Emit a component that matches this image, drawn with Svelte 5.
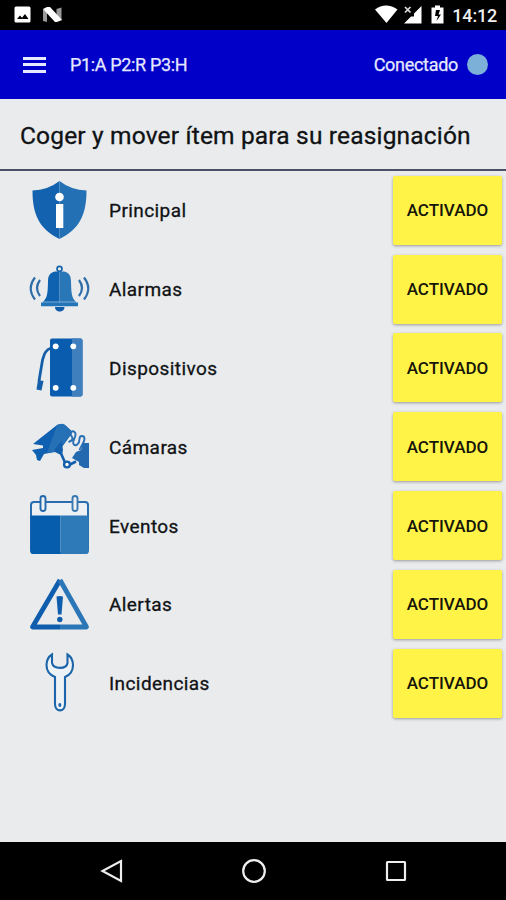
<script lang="ts">
    const items = [
        { id: 'shield', name: 'Principal' },
        { id: 'bell', name: 'Alarmas' },
        { id: 'device', name: 'Dispositivos' },
        { id: 'camera', name: 'Cámaras' },
        { id: 'calendar', name: 'Eventos' },
        { id: 'alert', name: 'Alertas' },
        { id: 'wrench', name: 'Incidencias' }
    ];
</script>

<div class="screen">
    <div class="status">
        <svg class="notifications" viewBox="0 0 50 18">
            <rect x="0.5" y="0.5" width="16" height="16" rx="1.5" fill="#fff" />
            <path d="M3 13 6 9.5l2 2.3L11 8l3.5 5z" fill="#000" />
            <path d="M29 3v12l4 1V6z" fill="#999" />
            <path d="M47.500 1.500v13l-5-3V3z" fill="#999" />
            <path d="M29 3 33 1h3l12 13-5 2h-2z" fill="#fff" />
        </svg>
        <div class="right">
            <svg class="indicators" viewBox="0 0 70 20">
                <path d="M0 4.500C7-.8 15-.8 22.500 4.500L11.500 18z" fill="#fff" />
                <path d="M46.500 1v17.500H29L36 11.500h3V8.500z" fill="#fff" />
                <path d="m30 2 5.500 5.500m0-5.500L30 7.500" stroke="#ddd" stroke-width="1.700" />
                <path d="M56.500 2.500H60V.5h5v2h3.500v16h-12z" fill="#fff" />
                <path d="M65 5h-4l-1 6h3l-1.500 5L66 9.500h-2.500z" fill="#000" />
            </svg>
            <span class="clock">14:12</span>
        </div>
    </div>

    <header>
        <div class="menu"><i></i><i></i><i></i></div>
        <span class="profile">P1:A P2:R P3:H</span>
        <span class="state">Conectado</span>
        <div class="dot"></div>
    </header>

    <h1>Coger y mover ítem para su reasignación</h1>

    <main>
        {#each items as item}
            <div class="row">
                <svg class="icon" viewBox="0 0 80 78.800">
                    {#if item.id === 'shield'}
                        <path d="M39.500 10Q28 19 12.500 19.500C12.500 43 19 58 39.500 68z" fill="#1262b0" />
                        <path d="M39.500 10Q51 19 66.500 19.500C66.500 43 60 58 39.500 68z" fill="#2470b4" />
                        <circle cx="39.500" cy="26" r="4.300" fill="#fff" />
                        <rect x="36" y="33" width="7.300" height="24" fill="#fff" />
                    {:else if item.id === 'bell'}
                        <circle cx="39.500" cy="18.800" r="2.500" fill="none" stroke="#1764ad" stroke-width="1.700" />
                        <path d="M35 57h9.500c0 6-9.500 6-9.500 0z" fill="#0f5cab" />
                        <path d="M39.500 21.500H35c-5 1-7 4-7 10-.3 12-.5 16-5 20.500v1h16.500z" fill="#0f62b0" />
                        <path d="M39.500 21.500H44c5 1 7 4 7 10 .3 12 .5 16 5 20.500v1H39.500z" fill="#2a77b8" />
                        <path d="M21 52.500h37v3.800H21z" fill="#2474b8" />
                        <path d="M22.500 52h34" stroke="#8bb6da" stroke-width="0.900" />
                        <path d="M20 30q-6 8 0 16M15 27.500q-8.500 11 0 22M59 30q6 8 0 16M64 27.500q8.500 11 0 22" fill="none" stroke="#2f6da9" stroke-width="2.200" />
                    {:else if item.id === 'device'}
                        <path d="M31 19c-6 2-7 7-8.500 12l-3.500 21" fill="none" stroke="#155ea9" stroke-width="2.800" />
                        <path d="m18 51 5.500 1-2 9.500-5-1z" fill="#155ea9" />
                        <rect x="30" y="9.500" width="32.500" height="58" rx="2" fill="#0a5cae" />
                        <path d="M52 9.500h8.500q2 0 2 2v54q0 2-2 2H52z" fill="#407fbd" />
                        <g fill="#fff">
                            <circle cx="35.700" cy="17.300" r="2.900" />
                            <circle cx="53.300" cy="17.300" r="2.900" />
                            <circle cx="35.700" cy="58.800" r="2.900" />
                            <circle cx="53.300" cy="58.800" r="2.900" />
                        </g>
                    {:else if item.id === 'camera'}
                        <path d="M13 37 37 18q4-2 8 0l6 5.500q2 2 0 4L39 44l-4 1-11 2-4 7-3-1-1-5-4-5 11-2v-2.500z" fill="#0f60b0" />
                        <path d="m37 18 4-1q2-.5 4 1l6 5.500q2 2 0 4L39 44l-12 2z" fill="#2671b5" />
                        <path d="M34 43 41.500 34l1.500 9-1 5z" fill="#145fab" />
                        <path d="m35 43.500 6 3 4 9M50 57.500l6-3" fill="none" stroke="#145fab" stroke-width="2.600" />
                        <circle cx="47" cy="57.500" r="2.900" fill="#fff" stroke="#145fab" stroke-width="2.400" />
                        <path d="M48.500 35q6-2 3-6c-3-3 1-6 3-4 4 3-3 8-1 12 2 3 6 0 6-5 0-4 5-4 5 0 0 3-3 6-5 11" fill="none" stroke="#286fb4" stroke-width="1.900" />
                        <path d="m52 51 4-6 5-2 2-7h6v25h-5l-5-3v-3z" fill="#2369b0" />
                    {:else if item.id === 'calendar'}
                        <rect x="11" y="16" width="57" height="51" rx="3" fill="#edf1f4" stroke="#2b6eb0" stroke-width="2" />
                        <path d="M10.500 29.500h30V68H13q-2.500 0-2.500-2.500z" fill="#075dad" />
                        <path d="M40.500 29.500H68.500V65.500Q68.500 68 66 68H40.500z" fill="#2e79b7" />
                        <rect x="20.500" y="10" width="5" height="15" rx="2.500" fill="#eef1f4" stroke="#2368ab" stroke-width="1.900" />
                        <rect x="52.500" y="10" width="5" height="15" rx="2.500" fill="#eef1f4" stroke="#3979b1" stroke-width="1.900" />
                    {:else if item.id === 'alert'}
                        <path d="M40 15 12.500 62h27.500" fill="none" stroke="#0f5eae" stroke-width="4.800" stroke-linejoin="round" />
                        <path d="m40 15 26.500 47H40" fill="none" stroke="#2b76b6" stroke-width="4.800" stroke-linejoin="round" />
                        <path d="M36.500 31.500q3-1 6.500 0l-1.500 18h-3.500z" fill="#0e5ead" />
                        <circle cx="39.800" cy="54.500" r="2.700" fill="#0e5ead" />
                    {:else}
                        <path d="M32 10.500q-5.500 3.500-5.500 10.500c0 6 3.500 10 8.500 12v27c0 8.500 10 8.500 10 0V33c5-2 8-6 8-12q0-7-5.500-10.500v8.500c-1 6.500-14 6.500-15.500 0z" fill="#edf2f5" stroke="#1c65ab" stroke-width="2.100" />
                        <ellipse cx="39.800" cy="61" rx="1.500" ry="2" fill="#1c65ab" />
                    {/if}
                </svg>
                <span class="name">{item.name}</span>
                <button>ACTIVADO</button>
            </div>
        {/each}
    </main>

    <nav>
        <svg viewBox="0 0 26 26"><path d="M22 3v20L3.500 13z" /></svg>
        <svg viewBox="0 0 26 26"><circle cx="13" cy="13" r="10.800" /></svg>
        <svg viewBox="0 0 26 26"><rect x="4" y="4" width="18" height="18" rx="0.500" /></svg>
    </nav>
</div>

<style>
    :global(body) {
        background: #e9ebed;
    }

    .screen {
        display: flex;
        flex-direction: column;
        height: 900px;
        font-family: Roboto, sans-serif;
        color: #101214;
        background: #e9ebed;
    }

    .status {
        display: flex;
        justify-content: space-between;
        align-items: center;
        box-sizing: border-box;
        height: 30px;
        padding: 0 9px 0 14px;
        background: #000;
        color: #eee;
        font-size: 18px;
        font-weight: 500;
    }
    .notifications {
        width: 50px;
        height: 18px;
    }
    .right {
        display: flex;
        align-items: center;
        gap: 7px;
    }
    .indicators {
        width: 70px;
        height: 20px;
    }
    .clock {
        letter-spacing: -.2px;
    }

    header {
        display: flex;
        align-items: center;
        box-sizing: border-box;
        height: 69px;
        padding: 0 18px 0 23px;
        background: #0000c8;
        color: #e6e8ff;
        font-size: 18px;
        -webkit-text-stroke: .25px;
    }
    .menu {
        display: grid;
        gap: 3.500px;
        width: 23px;
        margin-right: 24px;
    }
    .menu i {
        height: 3px;
        background: #e6e8ff;
    }
    .profile {
        letter-spacing: -.35px;
    }
    .state {
        margin-left: auto;
        letter-spacing: -.3px;
    }
    .dot {
        width: 21px;
        height: 21px;
        margin-left: 9px;
        border-radius: 50%;
        background: #7cb0d8;
    }

    h1 {
        box-sizing: border-box;
        height: 72px;
        margin: 0;
        padding-left: 20px;
        border-bottom: 2px solid #4b5066;
        font-size: 24.500px;
        font-weight: 400;
        letter-spacing: .17px;
        line-height: 73px;
        white-space: nowrap;
        -webkit-text-stroke: .3px;
    }

    main {
        flex: 1;
    }
    .row {
        display: flex;
        align-items: center;
        height: 78.800px;
        padding: 0 4px 0 20px;
    }
    .icon {
        width: 80px;
        height: 78.800px;
        margin-right: 9px;
    }
    .name {
        flex: 1;
        padding-top: 1px;
        font-size: 19px;
        letter-spacing: .42px;
        -webkit-text-stroke: .3px;
    }
    button {
        width: 109px;
        height: 69px;
        padding: 0;
        border: none;
        border-radius: 2px;
        background: #fff347;
        box-shadow: 0 1px 3px rgba(0, 0, 0, .35);
        color: #15150a;
        font: 500 17px Roboto, sans-serif;
    }

    nav {
        display: flex;
        justify-content: center;
        align-items: center;
        gap: 116px;
        height: 58px;
        padding-left: 2px;
        background: #000;
    }
    nav svg {
        width: 26px;
        height: 26px;
        fill: none;
        stroke: #eee;
        stroke-width: 2.200;
    }
</style>
